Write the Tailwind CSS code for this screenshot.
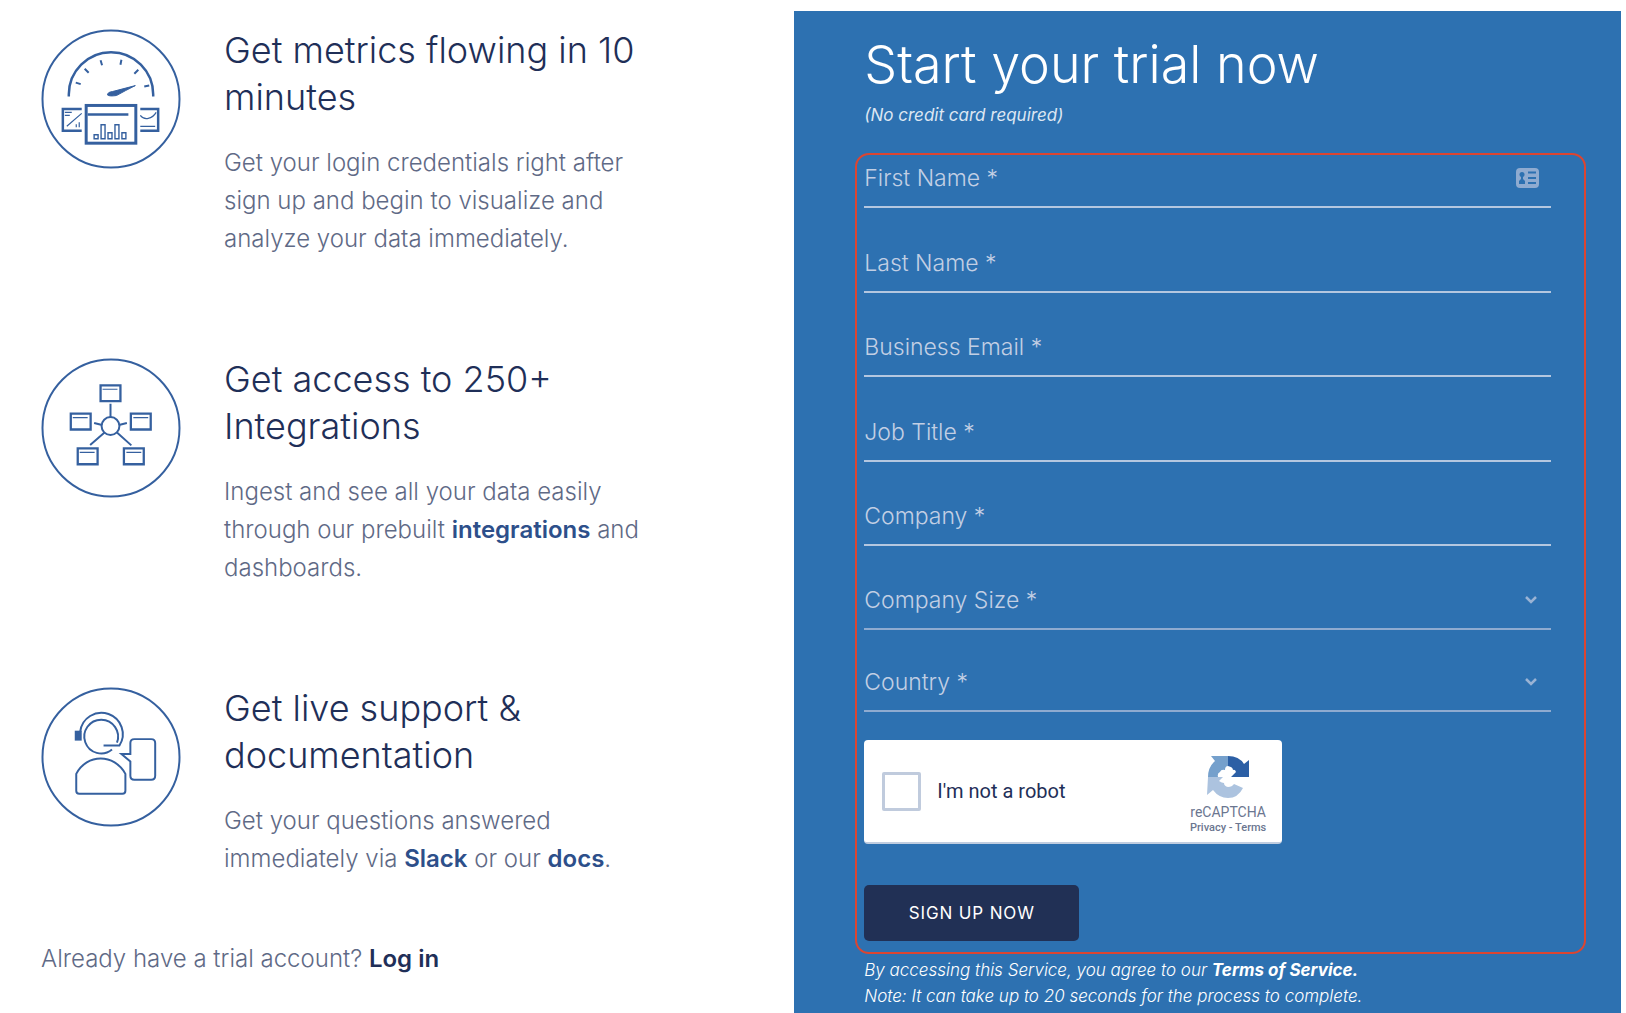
<!DOCTYPE html>
<html lang="en">
<head>
<meta charset="utf-8">
<meta name="viewport" content="width=device-width, initial-scale=1">
<title>Start your trial now</title>
<script src="https://cdn.jsdelivr.net/npm/@tailwindcss/browser@4"></script>
</head>
<body class="bg-white font-['Inter',sans-serif] text-[#5f6a86]">
<div class="grid grid-cols-[49%_1fr] pt-[11px] pr-[5px]">
  <main class="pl-[41px] pt-[16px]">
    <section class="flex h-[329px] gap-[43px]">
      <svg class="mt-[2px] size-[140px] shrink-0" viewBox="0 0 141 141" fill="none" stroke="#35609f" stroke-width="2">
        <circle cx="70.500" cy="70.500" r="69"/>
        <path d="M28 68v-2a42.500 42.500 0 0 1 85 0v2" stroke-width="2.500"/>
        <path d="M35 54l5 1.500M44 40l4 4M60 31.500l1.500 5M81 31l-1 5M98 41l-4 4M104 58l5-1"/>
        <path d="M67 66.500q0-3 5-3.500l23-6q-10 5-19 10q-7 1-9-.500z" fill="#35609f" stroke-width="1"/>
        <rect x="45.500" y="77" width="50" height="38" stroke-width="3"/>
        <path d="M47 86h41" stroke-width="2.500"/>
        <path d="M53.500 106.500h4v4h-4zM60.500 96.500h4v14h-4zM67.500 104.500h4v6h-4zM74.500 96.500h4v14h-4zM81.500 104.500h4v6h-4z" stroke-width="1.400"/>
        <path d="M41 80.500H22v22h19M100 80.500h18v22h-18" stroke-width="2.500"/>
        <path d="M26 98l15-13M100 87q3 4 8 3t8-6M24 84h7M24 87h5M35.500 99v-3M38.500 99v-5M100 98h15" stroke-width="1.200"/>
      </svg>
      <div class="w-[430px]">
        <h2 class="text-[36px]/[47px] font-light text-[#1f2f58]">Get metrics flowing in 10 minutes</h2>
        <p class="mt-[23px] text-[24px]/[38px] font-light">Get your login credentials right after sign up and begin to visualize and analyze your data immediately.</p>
      </div>
    </section>
    <section class="flex h-[329px] gap-[43px]">
      <svg class="mt-[2px] size-[140px] shrink-0" viewBox="0 0 141 141" fill="none" stroke="#35609f" stroke-width="2">
        <circle cx="70.500" cy="70.500" r="69"/>
        <circle cx="70" cy="68.500" r="9"/>
        <path d="M70 59.500V46M61.500 67.500l-8-2M78.500 67.500l8-2M64 75L49.500 87.500M76.500 75L91 88"/>
        <path d="M60 27.500h20v16h-20zM30 56h20v16h-20zM90.500 56h20v16h-20zM37 91h20v16h-20zM83.500 91h20v16h-20z" stroke-width="2.300"/>
        <path d="M62 31.500h15M32 60h15M93 60h15M39 95h15M86 95h15" stroke-width="1.200"/>
      </svg>
      <div class="w-[430px]">
        <h2 class="text-[36px]/[47px] font-light text-[#1f2f58]">Get access to 250+<br>Integrations</h2>
        <p class="mt-[23px] text-[24px]/[38px] font-light">Ingest and see all your data easily through our prebuilt <a href="#" class="font-semibold text-[#2d4f8a]">integrations</a> and dashboards.</p>
      </div>
    </section>
    <section class="flex h-[255px] gap-[43px]">
      <svg class="mt-[2px] size-[140px] shrink-0" viewBox="0 0 141 141" fill="none" stroke="#35609f" stroke-width="2">
        <circle cx="70.500" cy="70.500" r="69"/>
        <path d="M39.500 45A21.500 21.500 0 1 1 79 59H63"/>
        <path d="M76.500 56A17 17 0 1 0 71.500 63"/>
        <path d="M34 44h7v10h-7z" fill="#35609f" stroke="none"/>
        <path d="M35.500 87.500C46 67 74 67 85 87.500v17q0 3-3 3h-43.500q-3 0-3-3z"/>
        <path d="M90 67.500v-11q0-4 4-4h17q4 0 4 4v33q0 4-4 4h-17q-4 0-4-4V75l-9-7.500z"/>
      </svg>
      <div class="w-[430px]">
        <h2 class="text-[36px]/[47px] font-light text-[#1f2f58]">Get live support &amp; documentation</h2>
        <p class="mt-[23px] text-[24px]/[38px] font-light">Get your questions answered immediately via <a href="#" class="font-semibold text-[#2d4f8a]">Slack</a> or our <a href="#" class="font-semibold text-[#2d4f8a]">docs</a>.</p>
      </div>
    </section>
    <p class="text-[24px]/[38px] font-light">Already have a trial account? <a href="#" class="font-semibold text-[#1f2f58]">Log in</a></p>
  </main>

  <aside class="bg-[#2d71b1] pt-[22px] pr-[35px] pb-[4px] pl-[61px] text-white">
    <h1 class="pl-[9px] text-[52px]/[64px] font-light">Start your trial now</h1>
    <p class="mt-[6px] pl-[9px] text-[17px]/[24px] font-normal text-[#dde7f3] italic">(No credit card required)</p>
    <form class="mt-[26px] rounded-[14px] border-2 border-[#dc4531] pr-[33px] pb-[11px] pl-[7px] text-[23px]/[28px] font-light text-[#c2cfe4]">
      <div class="grid h-[53px] items-center border-b-2 border-[#b4c7e0] pb-[6px]">
        <label for="first" class="[grid-area:1/1]">First Name *</label>
        <input id="first" type="text" class="h-full w-full bg-transparent outline-none [grid-area:1/1]">
        <svg class="mr-[12px] h-5 w-[23px] justify-self-end [grid-area:1/1]" viewBox="0 0 23 20">
          <rect width="23" height="20" rx="4" fill="#8fabd0"/>
          <circle cx="6" cy="6.500" r="2.500" fill="#2d71b1"/>
          <path d="M5 8h2v3l2 2v3H3v-3l2-2z" fill="#2d71b1"/>
          <path d="M12 4.500h8M12 10h8M12 15h8" stroke="#2d71b1" stroke-width="2"/>
        </svg>
      </div>
      <div class="mt-8 grid h-[53px] items-center border-b-2 border-[#b4c7e0] pb-[6px]">
        <label for="last" class="[grid-area:1/1]">Last Name *</label>
        <input id="last" type="text" class="h-full w-full bg-transparent outline-none [grid-area:1/1]">
      </div>
      <div class="mt-[31px] grid h-[53px] items-center border-b-2 border-[#b4c7e0] pb-[6px]">
        <label for="email" class="[grid-area:1/1]">Business Email *</label>
        <input id="email" type="email" class="h-full w-full bg-transparent outline-none [grid-area:1/1]">
      </div>
      <div class="mt-8 grid h-[53px] items-center border-b-2 border-[#b4c7e0] pb-[6px]">
        <label for="job" class="[grid-area:1/1]">Job Title *</label>
        <input id="job" type="text" class="h-full w-full bg-transparent outline-none [grid-area:1/1]">
      </div>
      <div class="mt-[31px] grid h-[53px] items-center border-b-2 border-[#b4c7e0] pb-[6px]">
        <label for="company" class="[grid-area:1/1]">Company *</label>
        <input id="company" type="text" class="h-full w-full bg-transparent outline-none [grid-area:1/1]">
      </div>
      <div class="mt-[31px] grid h-[53px] items-center border-b-2 border-[#8fabd0] pb-[6px]">
        <label for="size" class="[grid-area:1/1]">Company Size *</label>
        <select id="size" class="h-full w-full appearance-none bg-transparent outline-none [grid-area:1/1]"><option></option></select>
        <svg class="pointer-events-none mr-[14px] h-2 w-3 justify-self-end [grid-area:1/1]" viewBox="0 0 12 8" fill="none" stroke="#9ab3d4" stroke-width="2.500"><path d="M1 1l5 5 5-5"/></svg>
      </div>
      <div class="mt-[29px] grid h-[53px] items-center border-b-2 border-[#8fabd0] pb-[6px]">
        <label for="country" class="[grid-area:1/1]">Country *</label>
        <select id="country" class="h-full w-full appearance-none bg-transparent outline-none [grid-area:1/1]"><option></option></select>
        <svg class="pointer-events-none mr-[14px] h-2 w-3 justify-self-end [grid-area:1/1]" viewBox="0 0 12 8" fill="none" stroke="#9ab3d4" stroke-width="2.500"><path d="M1 1l5 5 5-5"/></svg>
      </div>
      <div class="mt-7 flex h-[104px] w-[418px] items-center rounded-[4px] border-b-2 border-[#c0cde0] bg-white pr-[16px] pl-[18px] font-['Roboto',sans-serif]">
        <input id="robot" type="checkbox" class="size-[39px] appearance-none rounded-[2px] border-3 border-[#c0cbdd] bg-white">
        <label for="robot" class="ml-[16px] grow text-[20px] font-normal text-[#1f2f58]">I'm not a robot</label>
        <div class="flex flex-col items-center pt-[8px] font-medium text-[#6b7690]">
          <svg class="size-[44px]" viewBox="0 0 44 44">
            <path d="M22 1Q33 1 38 9l5-4v17H25l5-5q-1-3-3-2 0-3-5-4z" fill="#2c5fa5"/>
            <path d="M22 1v10q-3 0-3 4-4-1-5 2-3 1-2 5H2Q2 12 9 6L5 1z" fill="#75a0cc"/>
            <path d="M2 22h15l-4 4q3 2 5 2 0 3 4 4 4 0 6-3l9 4q-5 10-15 10-9 0-15-8l-6 5z" fill="#acc3df"/>
          </svg>
          <span class="mt-[4px] text-[14px]/[18px] font-normal">reCAPTCHA</span>
          <span class="text-[11px]/[14px]"><a href="#">Privacy</a> - <a href="#">Terms</a></span>
        </div>
      </div>
      <button type="submit" class="mt-[41px] block h-[56px] w-[215px] rounded-[5px] bg-[#213055] text-[17px] font-normal tracking-wider text-white">SIGN UP NOW</button>
    </form>
    <p class="mt-[3px] pl-[9px] text-[17px]/[26px] font-light italic">By accessing this Service, you agree to our <a href="#" class="font-bold">Terms of Service.</a><br>Note: It can take up to 20 seconds for the process to complete.</p>
  </aside>
</div>
</body>
</html>
